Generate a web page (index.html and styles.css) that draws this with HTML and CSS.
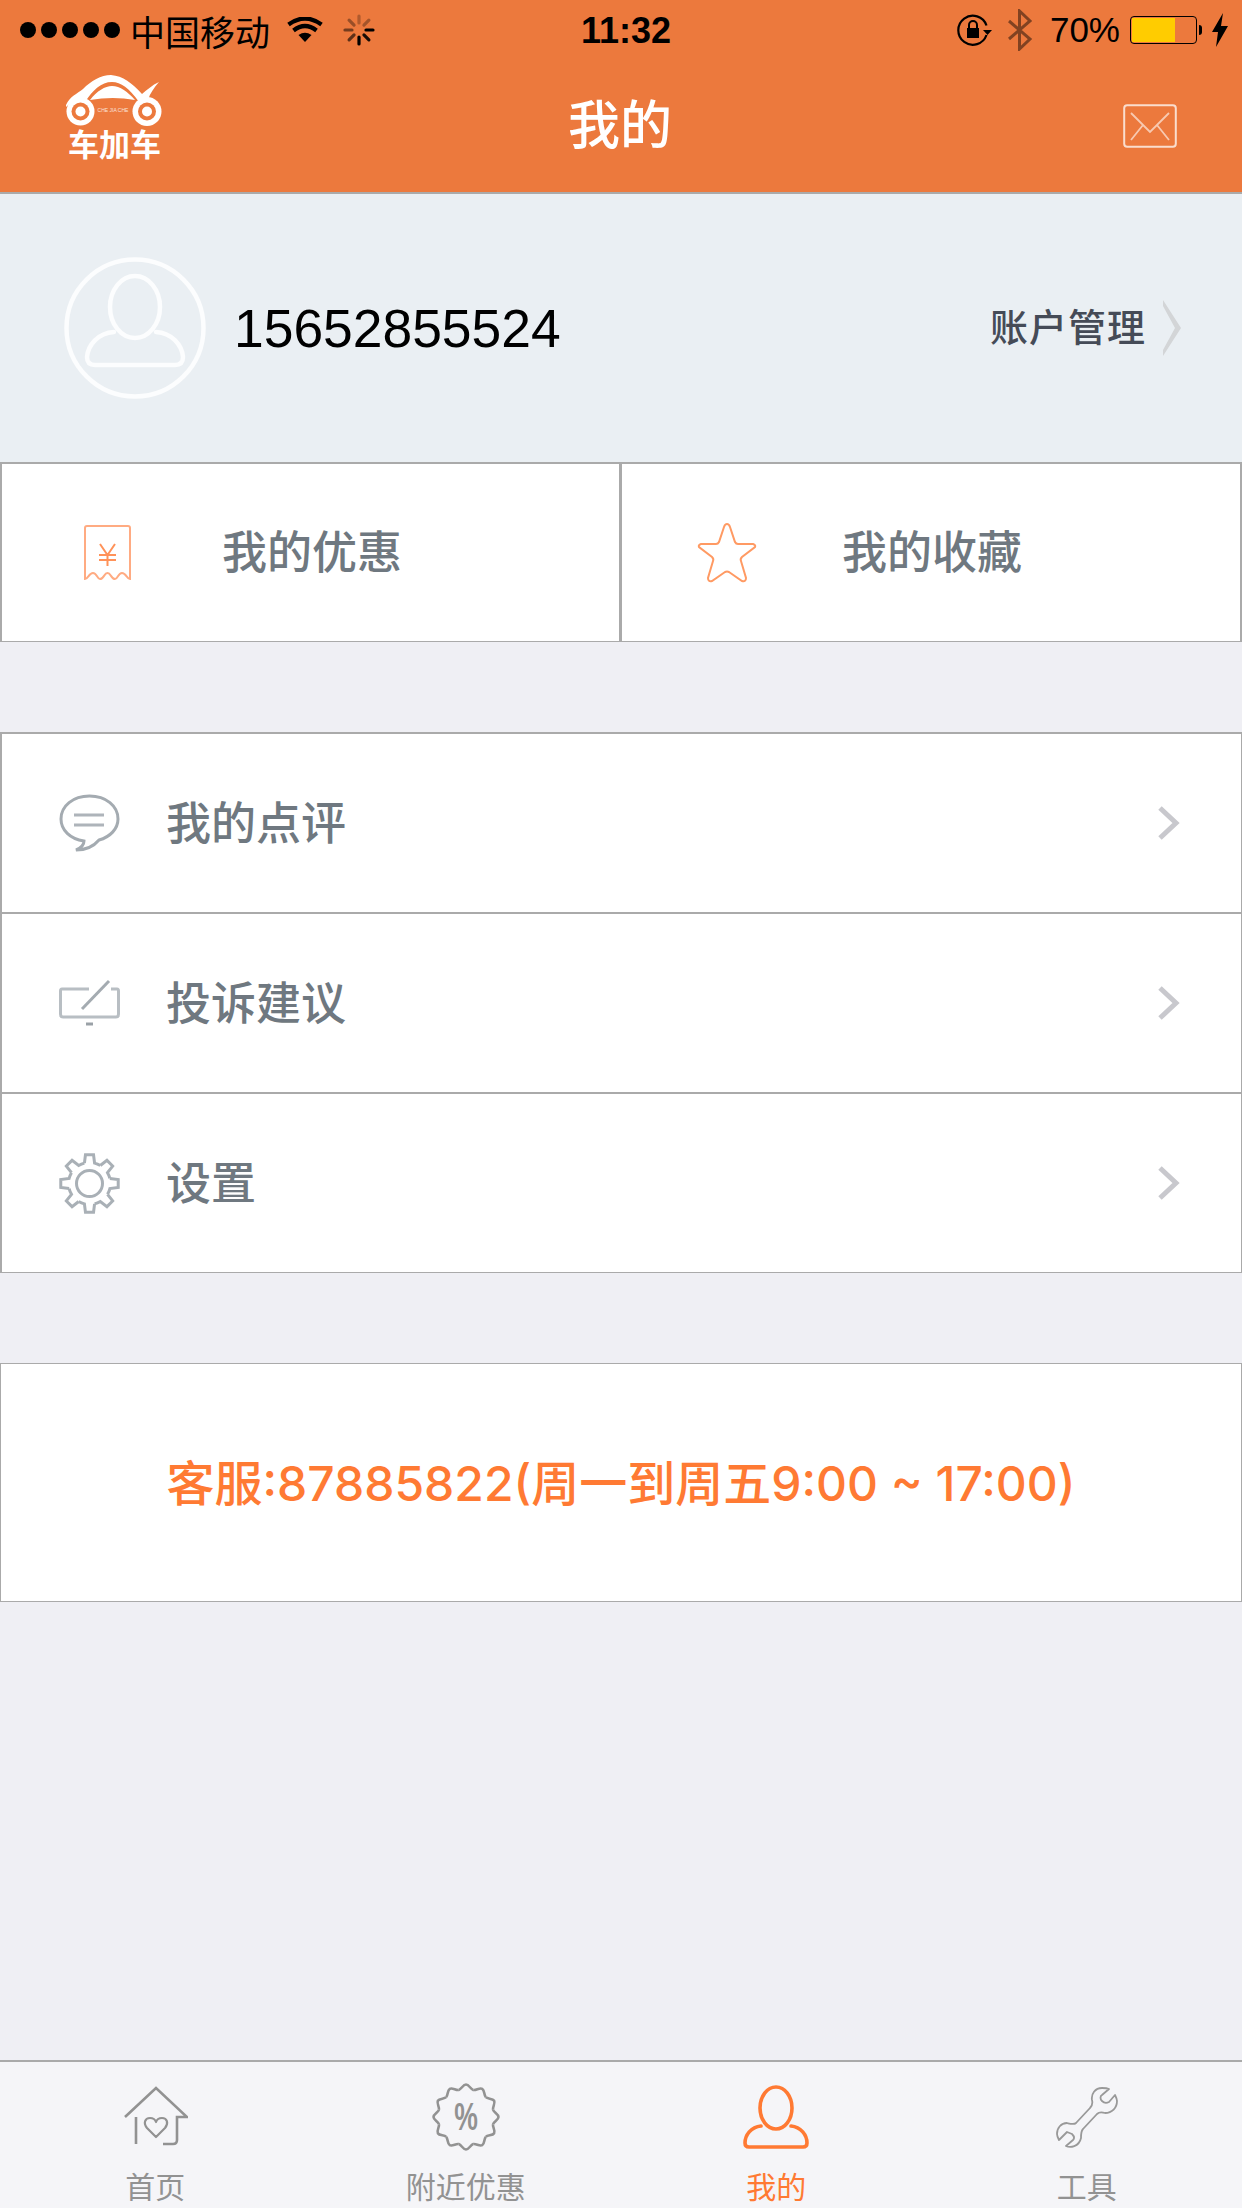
FILE: index.html
```html
<!DOCTYPE html>
<html>

<head>
    <meta charset="utf-8">
    <title>我的</title>
    <link rel="stylesheet" href="styles.css">
</head>

<body>
    <svg class="defs" width="0" height="0">
        <defs>
            <path id="gear-tooth" d="M20.38 -5.08L28.72 -4.04L28.72 4.04L20.38 5.08A21 21 0 0 1 18 10.82" />
            <path id="badge-wave" d="M27.05 -7.25C27.8 -4.5 32.5 -3 32.5 0C32.5 3 27.8 4.5 27.05 7.25" />
            <path id="chevron" d="M3 3L19 18L3 33" />
        </defs>
    </svg>

    <header class="top">
        <div class="status">
            <div class="status-left">
                <span class="signal"><i></i><i></i><i></i><i></i><i></i></span>
                <span class="carrier">中国移动</span>
                <svg class="wifi" width="36" height="26" viewBox="0 0 36 26">
                    <path d="M18 25L11.5 18Q18 13.5 24.5 18Z" fill="#000" />
                    <path d="M6.5 13.5Q18 4.5 29.5 13.5" fill="none" stroke="#000" stroke-width="4.2" />
                    <path d="M1.5 7.5Q18 -4.5 34.5 7.5" fill="none" stroke="#000" stroke-width="4.2" />
                </svg>
                <svg class="spinner" width="32" height="32" viewBox="-16 -16 32 32" stroke="#000" stroke-width="3.2" stroke-linecap="round">
                    <line x1="0" y1="-7" x2="0" y2="-14" opacity=".25" />
                    <line x1="0" y1="-7" x2="0" y2="-14" opacity=".3" transform="rotate(45)" />
                    <line x1="0" y1="-7" x2="0" y2="-14" opacity="1" transform="rotate(90)" />
                    <line x1="0" y1="-7" x2="0" y2="-14" opacity=".9" transform="rotate(135)" />
                    <line x1="0" y1="-7" x2="0" y2="-14" opacity="1" transform="rotate(180)" />
                    <line x1="0" y1="-7" x2="0" y2="-14" opacity=".6" transform="rotate(225)" />
                    <line x1="0" y1="-7" x2="0" y2="-14" opacity=".5" transform="rotate(270)" />
                    <line x1="0" y1="-7" x2="0" y2="-14" opacity=".35" transform="rotate(315)" />
                </svg>
            </div>
            <div class="time">11:32</div>
            <div class="status-right">
                <svg class="lock" width="36" height="32" viewBox="0 0 36 32">
                    <path d="M29.5 21A14.5 14.5 0 1 1 29.5 11.5" fill="none" stroke="#000" stroke-width="2.2" />
                    <path d="M26 16H35L30.5 21Z" fill="#000" />
                    <rect x="10" y="14" width="12" height="10" fill="#000" />
                    <path d="M12 14V11A4 4 0 0 1 20 11V14" fill="none" stroke="#000" stroke-width="2" />
                </svg>
                <svg class="bluetooth" width="26" height="42" viewBox="0 0 26 42">
                    <path d="M2 12L23 30L12.5 40V2L23 12L2 30" fill="none" stroke="#000" stroke-opacity=".45" stroke-width="3" />
                </svg>
                <span class="battery-text">70%</span>
                <div class="battery"><div class="battery-fill"></div></div>
                <span class="battery-tip"></span>
                <svg class="bolt" width="16" height="34" viewBox="0 0 16 34">
                    <path d="M11 0L0 19H6L4 34L16 13H9Z" fill="#000" />
                </svg>
            </div>
        </div>
        <nav class="nav">
            <div class="logo">
                <svg width="102" height="52" viewBox="0 0 102 52">
                    <path d="M3 31C7 22 14 20 20 15C28 7 38 1 48 1C60 2 69 9 79 20C84 16 89 11 96 8C91 14 87 19 85 26L76 28C66 14 58 8 49 8C38 8 30 16 22 28C14 25 8 28 3 33Z" fill="#fff" />
                    <path d="M27 26C34 17 42 12 49 12C57 12 65 18 72 26Q50 22 27 26Z" fill="#fff" />
                    <circle cx="17.5" cy="37.5" r="14" fill="#fff" />
                    <circle cx="17.5" cy="37.5" r="9" fill="#ec793d" />
                    <circle cx="17.5" cy="37.5" r="5" fill="#fff" />
                    <circle cx="84" cy="37.5" r="14.5" fill="#fff" />
                    <circle cx="84" cy="37.5" r="9" fill="#ec793d" />
                    <circle cx="84" cy="37.5" r="5" fill="#fff" />
                    <text class="logo-small" x="50" y="38" text-anchor="middle">CHE JIA CHE</text>
                </svg>
                <div class="logo-text">车加车</div>
            </div>
            <h1 class="title">我的</h1>
            <svg class="mail" width="54" height="44" viewBox="0 0 54 44" fill="none" stroke="#fff" stroke-opacity=".6">
                <rect x="1.2" y="1.2" width="51.6" height="41.6" rx="3" stroke-width="2" stroke-opacity=".75" />
                <path d="M8 9L27 28L46 9M8 36L20 21M46 36L34 21" stroke-width="1.8" />
            </svg>
        </nav>
    </header>

    <section class="profile">
        <svg class="avatar" width="142" height="142" viewBox="0 0 142 142" fill="none" stroke="#fff" stroke-opacity=".85" stroke-width="4.5">
            <circle cx="71" cy="71" r="68.5" />
            <ellipse cx="71" cy="50" rx="25" ry="31" />
            <path d="M50 75C34 76 24 88 23 100Q23 108 31 108H111Q119 108 119 100C118 88 108 76 92 75" stroke-linecap="round" />
        </svg>
        <div class="phone">15652855524</div>
        <div class="account">账户管理</div>
        <svg class="account-arrow" width="20" height="56" viewBox="0 0 20 56">
            <path d="M0 0L18 28L0 56L0 50L12 28L0 6Z" fill="#d3d5d7" />
        </svg>
    </section>

    <section class="cells">
        <div class="cell">
            <div class="cell-icon">
                <svg width="50" height="58" viewBox="0 0 50 58" fill="none" stroke="#ffab82" stroke-width="2">
                    <path d="M3 55V4Q3 2 5 2H46Q48 2 48 4V55C45 55 44 49 40 49C36 49 36 55 33 55C29 55 29 49 25.5 49C22 49 22 55 18 55C15 55 15 49 11 49C7 49 6 55 3 55Z" />
                    <path d="M18 20L25.5 31L33 20M25.5 31V42M17 31H34M17 36H34" stroke="#ff9259" />
                </svg>
            </div>
            <span class="cell-label">我的优惠</span>
        </div>
        <div class="cell">
            <div class="cell-icon">
                <svg width="62" height="62" viewBox="0 0 62 62">
                    <path d="M31 2Q33 2 34 5L39 20Q40 22 42 22H57Q60 23 59 25L46 35Q44 37 45 39L50 56Q50 60 46 59L33 50Q31 49 29 50L16 59Q12 60 12 56L17 39Q18 37 16 35L3 25Q2 23 5 22H20Q22 22 23 20L28 5Q29 2 31 2Z" fill="none" stroke="#ff9a63" stroke-width="2" />
                </svg>
            </div>
            <span class="cell-label">我的收藏</span>
        </div>
    </section>

    <section class="menu">
        <div class="row">
            <div class="row-icon">
                <svg width="61" height="58" viewBox="0 0 61 58" fill="none" stroke="#a4abb1" stroke-width="3">
                    <path d="M30.5 2C14 2 2 12 2 25C2 36 11 45 25 47C25 51 22 54 17 56C29 56 35 52 40 46C51 43 59 35 59 25C59 12 47 2 30.5 2Z" />
                    <path d="M15 21H45M15 31H45" stroke="#aeb4ba" stroke-width="3.2" />
                </svg>
            </div>
            <span class="row-label">我的点评</span>
            <svg class="row-arrow" width="25" height="37" viewBox="0 0 25 37" fill="none" stroke="#c8c8cd" stroke-width="5">
                <use href="#chevron" />
            </svg>
        </div>
        <div class="row">
            <div class="row-icon">
                <svg width="61" height="48" viewBox="0 0 61 48" fill="none" stroke="#b8bec3" stroke-width="3">
                    <path d="M30 10H3Q1.5 10 1.5 12V35Q1.5 38 4 38H57Q59.5 38 59.5 35V12Q59.5 10 58 10H52" />
                    <path d="M23 30L50 2" stroke="#a4abb1" />
                    <path d="M27 45H34" stroke="#9aa1a7" stroke-width="3" />
                </svg>
            </div>
            <span class="row-label">投诉建议</span>
            <svg class="row-arrow" width="25" height="37" viewBox="0 0 25 37" fill="none" stroke="#c8c8cd" stroke-width="5">
                <use href="#chevron" />
            </svg>
        </div>
        <div class="row">
            <div class="row-icon">
                <svg width="61" height="61" viewBox="-30.5 -30.5 61 61" fill="none" stroke="#a9b0b6" stroke-width="3">
                    <use href="#gear-tooth" />
                    <use href="#gear-tooth" transform="rotate(45)" />
                    <use href="#gear-tooth" transform="rotate(90)" />
                    <use href="#gear-tooth" transform="rotate(135)" />
                    <use href="#gear-tooth" transform="rotate(180)" />
                    <use href="#gear-tooth" transform="rotate(225)" />
                    <use href="#gear-tooth" transform="rotate(270)" />
                    <use href="#gear-tooth" transform="rotate(315)" />
                    <circle r="13" />
                </svg>
            </div>
            <span class="row-label">设置</span>
            <svg class="row-arrow" width="25" height="37" viewBox="0 0 25 37" fill="none" stroke="#c8c8cd" stroke-width="5">
                <use href="#chevron" />
            </svg>
        </div>
    </section>

    <section class="service">客服:87885822(周一到周五9:00 ~ 17:00)</section>

    <footer class="tabs">
        <div class="tab">
            <div class="tab-icon">
                <svg width="66" height="62" viewBox="0 0 66 62" fill="none" stroke="#929292" stroke-width="2.6">
                    <path d="M3 31L34 2L65 31H55V54Q55 58 51 58H41M14 31V58" />
                    <path d="M34 51L25 42C21 37 23 32 28 32C31 32 33 33 34 36C35 33 37 32 40 32C45 32 47 37 43 42Z" stroke-width="2.2" stroke-linejoin="round" />
                </svg>
            </div>
            <span>首页</span>
        </div>
        <div class="tab">
            <div class="tab-icon">
                <svg width="68" height="68" viewBox="-34 -34 68 68" fill="none" stroke="#929292" stroke-width="2.6">
                    <use href="#badge-wave" />
                    <use href="#badge-wave" transform="rotate(30)" />
                    <use href="#badge-wave" transform="rotate(60)" />
                    <use href="#badge-wave" transform="rotate(90)" />
                    <use href="#badge-wave" transform="rotate(120)" />
                    <use href="#badge-wave" transform="rotate(150)" />
                    <use href="#badge-wave" transform="rotate(180)" />
                    <use href="#badge-wave" transform="rotate(210)" />
                    <use href="#badge-wave" transform="rotate(240)" />
                    <use href="#badge-wave" transform="rotate(270)" />
                    <use href="#badge-wave" transform="rotate(300)" />
                    <use href="#badge-wave" transform="rotate(330)" />
                    <text class="percent" x="0" y="13" text-anchor="middle" transform="scale(.7 1)">%</text>
                </svg>
            </div>
            <span>附近优惠</span>
        </div>
        <div class="tab active">
            <div class="tab-icon">
                <svg width="66" height="64" viewBox="0 0 66 64" fill="none" stroke="#ff7a33" stroke-width="3.6">
                    <ellipse cx="33" cy="23" rx="16" ry="21" />
                    <path d="M18 41C8 42 2 50 2 58Q2 62 6 62H60Q64 62 64 58C64 50 58 42 48 41" stroke-linecap="round" />
                </svg>
            </div>
            <span>我的</span>
        </div>
        <div class="tab">
            <div class="tab-icon">
                <svg width="64" height="62" viewBox="0 0 64 62" fill="none" stroke="#999" stroke-width="1.8" stroke-linejoin="round">
                    <path d="M47 2C40 2 36 8 37 14C38 18 37 20 35 22L21 37C19 39 16 38 12 37C6 37 2 42 2 48C2 50 3 52 4 54L12 46L17 48C19 50 20 52 18 54L11 60C15 62 24 61 26 52C26 47 26 45 28 43L42 28C44 26 47 26 50 27C57 27 62 22 62 15C62 13 61 11 60 9L54 16C52 17 49 17 47 15C45 13 45 10 47 9L54 3C52 2 49 2 47 2Z" />
                </svg>
            </div>
            <span>工具</span>
        </div>
    </footer>
</body>

</html>
```

FILE: styles.css
```css
* {
    box-sizing: border-box;
}

html,
body {
    margin: 0;
    height: 2208px;
    overflow: hidden;
}

body {
    display: flex;
    flex-direction: column;
    background-color: #efeff4;
    font-family: "Liberation Sans", "Noto Sans CJK SC", sans-serif;
}

.defs {
    display: block;
    height: 0;
}

/* status + nav */
.top {
    height: 194px;
    background-color: #ec793d;
    border-bottom: solid 2px #aaa;
}

.status {
    display: grid;
    grid-template-columns: 1fr auto 1fr;
    align-items: center;
    height: 60px;
    padding: 0 14px 0 20px;
    color: #000;
}

.status-left,
.status-right {
    display: flex;
    align-items: center;
}

.status-right {
    justify-content: flex-end;
}

.signal {
    display: flex;
    gap: 5px;
}

.signal i {
    width: 16px;
    height: 16px;
    border-radius: 50%;
    background-color: #000;
}

.carrier {
    margin-left: 10px;
    font-size: 35px;
}

.wifi {
    margin-left: 17px;
}

.spinner {
    margin-left: 20px;
}

.time {
    padding: 2px 0 0 4px;
    font-size: 36px;
    font-weight: bold;
}

.lock {
    margin-right: 14px;
}

.bluetooth {
    margin-right: 17px;
}

.battery-text {
    font-size: 35px;
    margin-right: 10px;
}

.battery {
    width: 67px;
    height: 28px;
    border: solid 1.5px #000;
    border-radius: 4px;
    padding: 1px;
}

.battery-fill {
    width: 68%;
    height: 100%;
    background-color: #fc0;
}

.battery-tip {
    width: 3px;
    height: 10px;
    margin: 0 10px 0 2px;
    background-color: #000;
    border-radius: 0 3px 3px 0;
}

.nav {
    display: grid;
    grid-template-columns: 1fr auto 1fr;
    align-items: center;
    height: 132px;
    padding: 0 65px 0 63px;
}

.logo {
    display: flex;
    flex-direction: column;
    align-items: flex-start;
    align-self: start;
    margin-top: 14px;
}

.logo svg {
    display: block;
}

.logo-text {
    margin: 3px 0 0 5px;
    color: #fff;
    font-size: 31px;
    font-weight: bold;
    line-height: 34px;
}

.logo-small {
    font-size: 5px;
    fill: #fff;
    opacity: .8;
}

.title {
    margin: 0;
    color: #fff;
    font-size: 52px;
    font-weight: 500;
    line-height: 1;
}

.mail {
    justify-self: end;
}

/* user */
.profile {
    display: flex;
    align-items: center;
    height: 268px;
    padding: 0 59px 0 64px;
    background-color: #eaeff3;
}

.phone {
    margin-left: 28px;
    color: #000;
    font-size: 53.4px;
}

.account {
    margin-left: auto;
    padding-bottom: 8px;
    color: #454b57;
    font-size: 38px;
    font-weight: 500;
    letter-spacing: 1px;
}

.account-arrow {
    margin-left: 17px;
}

.cells {
    display: grid;
    grid-template-columns: 1fr 1fr;
    height: 180px;
}

.cell {
    display: flex;
    align-items: center;
    padding-left: 60px;
    background-color: #fff;
    border: solid 2px #aaa;
    border-bottom-width: 1px;
}

.cell + .cell {
    border-left-width: 1px;
}

.cell-icon {
    display: flex;
    justify-content: center;
    width: 90px;
}

.cell-label {
    margin-left: 70px;
    padding-bottom: 6px;
    color: #6f7880;
    font-size: 45px;
    font-weight: 500;
}

/* list */
.menu {
    margin-top: 90px;
    border-bottom: solid 1px #aaa;
}

.row {
    display: flex;
    align-items: center;
    height: 180px;
    padding: 0 59px 0 57px;
    background-color: #fff;
    border: solid 2px #aaa;
    border-bottom: 0;
    border-right-width: 1px;
}

.row-icon {
    display: flex;
    justify-content: center;
    width: 61px;
}

.row-label {
    margin-left: 46px;
    padding-bottom: 6px;
    color: #6f7880;
    font-size: 45px;
    font-weight: 500;
}

.row-arrow {
    margin-left: auto;
}

.service {
    display: flex;
    align-items: center;
    justify-content: center;
    height: 239px;
    margin-top: 90px;
    padding-bottom: 6px;
    background-color: #fff;
    border: solid 1px #aaa;
    color: #ff7a33;
    font-family: "Inter", "Noto Sans CJK SC", sans-serif;
    font-size: 48px;
    font-weight: 500;
}

/* bottom bar */
.tabs {
    display: grid;
    grid-template-columns: repeat(4, 1fr);
    height: 148px;
    margin-top: auto;
    background-color: #f5f5f8;
    border-top: solid 2px #aaa;
    overflow: hidden;
}

.tab {
    display: flex;
    flex-direction: column;
    align-items: center;
    justify-content: flex-end;
    padding-bottom: 3px;
    color: #929292;
    font-size: 30px;
    line-height: 34px;
}

.tab-icon {
    display: flex;
    align-items: center;
    justify-content: center;
    height: 68px;
    margin-bottom: 20px;
}

.tab.active {
    color: #ff7a33;
}

.percent {
    fill: #929292;
    stroke: none;
    font-size: 38px;
    font-weight: bold;
}
```
